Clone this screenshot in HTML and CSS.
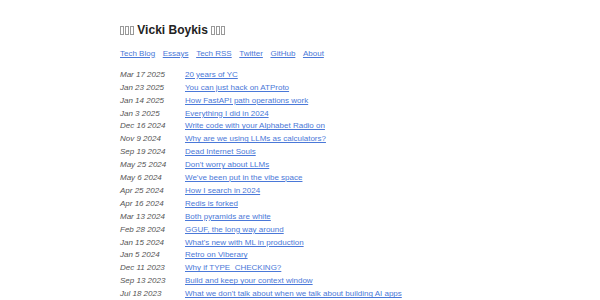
FILE: index.html
```html
<!DOCTYPE html>
<html lang="en">
<head>
  <meta charset="UTF-8">
  <meta name="viewport" content="width=device-width, initial-scale=1.0">
  <title>Vicki Boykis</title>
  <link rel="stylesheet" href="styles.css">
</head>
<body>
  <div class="wrapper">
    <!-- flower emoji don't render here, shown as missing-glyph boxes -->
    <h1 class="site-title"><span class="tofu"><i></i><i></i><i></i></span> Vicki Boykis <span class="tofu"><i></i><i></i><i></i></span></h1>

    <nav class="nav">
      <a href="#">Tech Blog</a>
      <a href="#">Essays</a>
      <a href="#">Tech RSS</a>
      <a href="#">Twitter</a>
      <a href="#">GitHub</a>
      <a href="#">About</a>
    </nav>

    <ul class="posts">
      <li><span class="date">Mar 17 2025</span><a href="#">20 years of YC</a></li>
      <li><span class="date">Jan 23 2025</span><a href="#">You can just hack on ATProto</a></li>
      <li><span class="date">Jan 14 2025</span><a href="#">How FastAPI path operations work</a></li>
      <li><span class="date">Jan 3 2025</span><a href="#">Everything I did in 2024</a></li>
      <li><span class="date">Dec 16 2024</span><a href="#">Write code with your Alphabet Radio on</a></li>
      <li><span class="date">Nov 9 2024</span><a href="#">Why are we using LLMs as calculators?</a></li>
      <li><span class="date">Sep 19 2024</span><a href="#">Dead Internet Souls</a></li>
      <li><span class="date">May 25 2024</span><a href="#">Don't worry about LLMs</a></li>
      <li><span class="date">May 6 2024</span><a href="#">We've been put in the vibe space</a></li>
      <li><span class="date">Apr 25 2024</span><a href="#">How I search in 2024</a></li>
      <li><span class="date">Apr 16 2024</span><a href="#">Redis is forked</a></li>
      <li><span class="date">Mar 13 2024</span><a href="#">Both pyramids are white</a></li>
      <li><span class="date">Feb 28 2024</span><a href="#">GGUF, the long way around</a></li>
      <li><span class="date">Jan 15 2024</span><a href="#">What's new with ML in production</a></li>
      <li><span class="date">Jan 5 2024</span><a href="#">Retro on Viberary</a></li>
      <li><span class="date">Dec 11 2023</span><a href="#">Why if TYPE_CHECKING?</a></li>
      <li><span class="date">Sep 13 2023</span><a href="#">Build and keep your context window</a></li>
      <li><span class="date">Jul 18 2023</span><a href="#">What we don't talk about when we talk about building AI apps</a></li>
    </ul>
  </div>
</body>
</html>
```

FILE: styles.css
```css
body {
  font-family: "Liberation Sans", Arial, sans-serif;
  margin: 0;
  padding: 0;
  background-color: #fff;
  color: #333;
}
.wrapper {
  padding-left: 120px;
  padding-top: 23px;
}
.site-title {
  font-size: 12px;
  line-height: 15px;
  margin: 0 0 9.6px;
  color: #222;
}
.tofu {
  display: inline-flex;
  gap: 1px;
  vertical-align: -1px;
}
.tofu i {
  display: block;
  width: 2px;
  height: 7px;
  border: 1px solid #999;
}
.nav {
  display: flex;
  gap: 7.6px;
  font-size: 8px;
  line-height: 12.8px;
  margin-bottom: 8.4px;
}
a {
  color: #4a78d8;
  text-decoration: underline;
}
.posts {
  list-style: none;
  margin: 0;
  padding: 0;
  font-size: 8px;
  line-height: 12.9px;
}
.posts li {
  display: grid;
  grid-template-columns: 65px auto;
}
.date {
  font-style: italic;
  color: #555;
}
```
